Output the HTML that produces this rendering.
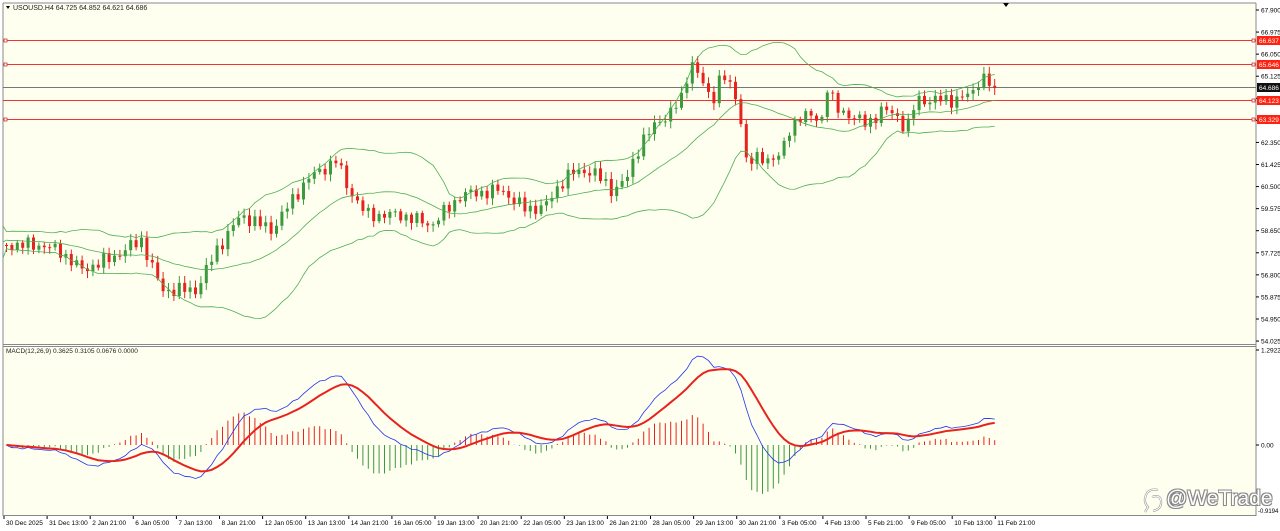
<!DOCTYPE html>
<html><head><meta charset="utf-8"><style>
html,body{margin:0;padding:0;background:#fff;}
body{width:1280px;height:531px;overflow:hidden;position:relative;font-family:"Liberation Sans",sans-serif;}
svg{position:absolute;left:0;top:0}
.wm{position:absolute;left:1166px;top:486px;font-size:21px;color:#fff;white-space:nowrap;line-height:26px;
text-shadow:-1px -1px 0 #888,1px -1px 0 #888,-1px 1px 0 #888,1px 1px 0 #888;font-family:"Liberation Sans",sans-serif}
</style></head><body>
<svg id="s" width="1280" height="531" xmlns="http://www.w3.org/2000/svg"></svg>
<div class="wm">@WeTrade</div>
<svg width="1280" height="531" style="pointer-events:none"><g fill="none" stroke="#999" stroke-width="2.2"><path d="M1158,490 q-9,-2 -12,5 q-3,7 2,12 l-3,5"/><path d="M1152,497 q8,-3 9,4 q1,8 -8,10"/></g><g fill="none" stroke="#fff" stroke-width="1"><path d="M1158,490 q-9,-2 -12,5 q-3,7 2,12 l-3,5"/><path d="M1152,497 q8,-3 9,4 q1,8 -8,10"/></g></svg>
<script>
var S=document.getElementById('s');var h='';
function L(x1,y1,x2,y2,c,w){h+='<line x1="'+x1+'" y1="'+y1+'" x2="'+x2+'" y2="'+y2+'" stroke="'+c+'" stroke-width="'+(w||1)+'"/>';}
function R(x,y,w,hh,c){h+='<rect x="'+x+'" y="'+y+'" width="'+w+'" height="'+hh+'" fill="'+c+'"/>';}
function T(x,y,t,c,s,a){h+='<text x="'+x+'" y="'+y+'" fill="'+(c||'#000')+'" font-size="'+(s||7)+'" font-family="Liberation Sans,sans-serif"'+(a?' text-anchor="'+a+'"':'')+'>'+t+'</text>';}
R(0,0,1280,531,'#fff');
R(3,3,1253,341,'#fffff0');R(3,347,1253,168,'#fffff0');
L(3,3,3,516,'#888');L(1256,3,1256,516,'#888');L(3,3,1256,3,'#888');
L(3,344.5,1256,344.5,'#888');L(3,346.5,1256,346.5,'#888');L(3,515.5,1256,515.5,'#888');
h+='<polygon points="1003,3 1009,3 1006,7" fill="#000"/>';
h+='<polygon points="6,6 10,6 8,9" fill="#000"/>';
T(13,10,'USOUSD.H4  64.725 64.852 64.621 64.686','#222',7);
var pl=['67.900','66.975','66.050','65.125','64.200','63.275','62.350','61.425','60.500','59.575','58.650','57.725','56.800','55.875','54.950','54.025'];
function py(p){return 10+(67.9-p)*23.86;}
for(var i=0;i<pl.length;i++){var y=py(+pl[i]);L(1256,y,1259,y,'#000');T(1261,y+2.5,pl[i],'#000',6.5);}
var hl=[[66.637,'#e33',1],[65.646,'#e33',1],[64.123,'#e33',0],[63.329,'#e33',1]];
hl.forEach(function(a){var y=Math.round(py(a[0]))+.5;L(3,y,1256,y,a[1]);if(a[2])h+='<rect x="4" y="'+(y-1.5)+'" width="3" height="3" fill="#fff" stroke="#c33" stroke-width=".8"/>';
h+='<rect x="1252" y="'+(y-1.5)+'" width="3" height="3" fill="#fff" stroke="#c33" stroke-width=".8"/>';R(1257,y-4.5,23,9,'#f21');T(1259,y+2.5,a[0].toFixed(3),'#fff',6.5);});
var yb=Math.round(py(64.686))+.5;L(3,yb,1256,yb,'#777');R(1257,yb-4.5,23,9,'#111');T(1259,yb+2.5,'64.686','#fff',6.5);
var K=[[5,245],[40,245],[60,252],[80,270],[110,258],[140,240],[160,290],[195,290],[215,250],[240,215],[270,230],[305,180],[335,160],[345,185],[365,215],[400,215],[430,225],[460,195],[500,190],[525,210],[545,205],[565,175],[590,170],[610,190],[625,180],[640,140],[660,120],[680,100],[690,60],[700,80],[710,105],[720,70],[730,90],[738,110],[745,160],[760,160],[780,155],[790,125],[800,115],[820,120],[825,85],[835,110],[850,115],[865,125],[880,110],[895,115],[905,130],[915,100],[930,100],[950,100],[970,95],[980,75],[992,88]];
function ip(x){for(var i=0;i<K.length-1;i++){if(x<=K[i+1][0]){var t=(x-K[i][0])/(K[i+1][0]-K[i][0]);return K[i][1]+t*(K[i+1][1]-K[i][1]);}}return K[K.length-1][1];}
var N=184,dx=5.4,C=[],X=[];var prev=245;
for(var i=0;i<N;i++){var x=5+i*dx;X.push(x);var c=ip(x)+Math.sin(i*2.7)*5+Math.sin(i*1.3)*3;if(i==N-1)c=88;
var o=prev;var hi=Math.min(o,c)-2-Math.abs(Math.sin(i*3.1))*5,lo=Math.max(o,c)+2+Math.abs(Math.cos(i*2.3))*5;
var col=c<o?'#3c9a3c':'#e8231e';L(x+1.5,hi,x+1.5,lo,col);R(x,Math.min(o,c),3,Math.max(1,Math.abs(c-o)),col);
C.push(c);prev=c;}
var pre=[];for(var k=0;k<19;k++)pre.push(240+Math.sin(k*1.7)*6);var CC=pre.concat(C);
var up='3,226 ',lw='3,258 ',md='3,242 ';
for(var i=0;i<N;i++){var ii=i+19;var m=0;for(var j=ii-19;j<=ii;j++)m+=CC[j];m/=20;var v=0;for(var j=ii-19;j<=ii;j++)v+=(CC[j]-m)*(CC[j]-m);var sd=Math.sqrt(v/20);
up+=(X[i]+1.5)+','+(m-2*sd)+' ';lw+=(X[i]+1.5)+','+(m+2*sd)+' ';md+=(X[i]+1.5)+','+m+' ';}
[up,lw,md].forEach(function(p){h+='<polyline points="'+p+'" fill="none" stroke="#4caf50" stroke-width=".8"/>';});
var P=CC.map(function(y){return 67.9-(y-10)/23.86;});
function ema(a,n){var k=2/(n+1),r=[a[0]];for(var i=1;i<a.length;i++)r.push(a[i]*k+r[i-1]*(1-k));return r;}
var e12=ema(P,12),e26=ema(P,26),mc=e12.map(function(v,i){return v-e26[i];}),sg=ema(mc,9);
function my(v){return 445-v*73.5;}
var bl='',rl='';
for(var i=0;i<N;i++){var ii=i+19;var d=(mc[ii]-sg[ii])*1.3;var x=X[i]+1.5;L(x,445,x,my(d),d>=0?'#e8231e':'#3c9a3c');bl+=x+','+my(mc[ii])+' ';rl+=x+','+my(sg[ii])+' ';}
h+='<polyline points="'+bl+'" fill="none" stroke="#2233ee" stroke-width=".8"/>';
h+='<polyline points="'+rl+'" fill="none" stroke="#e8231e" stroke-width="2"/>';
T(6,353,'MACD(12,26,9) 0.3625 0.3105 0.0676 0.0000','#222',6.5);
L(1256,350,1259,350,'#000');T(1261,352.5,'1.2922','#000',6.5);L(1256,445,1259,445,'#000');T(1261,447.5,'0.00','#000',6.5);T(1258,513,'-0.9194','#000',6);
var tl=['30 Dec 2025','31 Dec 13:00','2 Jan 21:00','6 Jan 05:00','7 Jan 13:00','8 Jan 21:00','12 Jan 05:00','13 Jan 13:00','14 Jan 21:00','16 Jan 05:00','19 Jan 13:00','20 Jan 21:00','22 Jan 05:00','23 Jan 13:00','26 Jan 21:00','28 Jan 05:00','29 Jan 13:00','30 Jan 21:00','3 Feb 05:00','4 Feb 13:00','5 Feb 21:00','9 Feb 05:00','10 Feb 13:00','11 Feb 21:00'];
for(var i=0;i<tl.length;i++){var x=4+i*43.1;L(x,516,x,519,'#000');T(x+2,525,tl[i],'#000',6.5);}
S.innerHTML=h;
</script>
</body></html>
